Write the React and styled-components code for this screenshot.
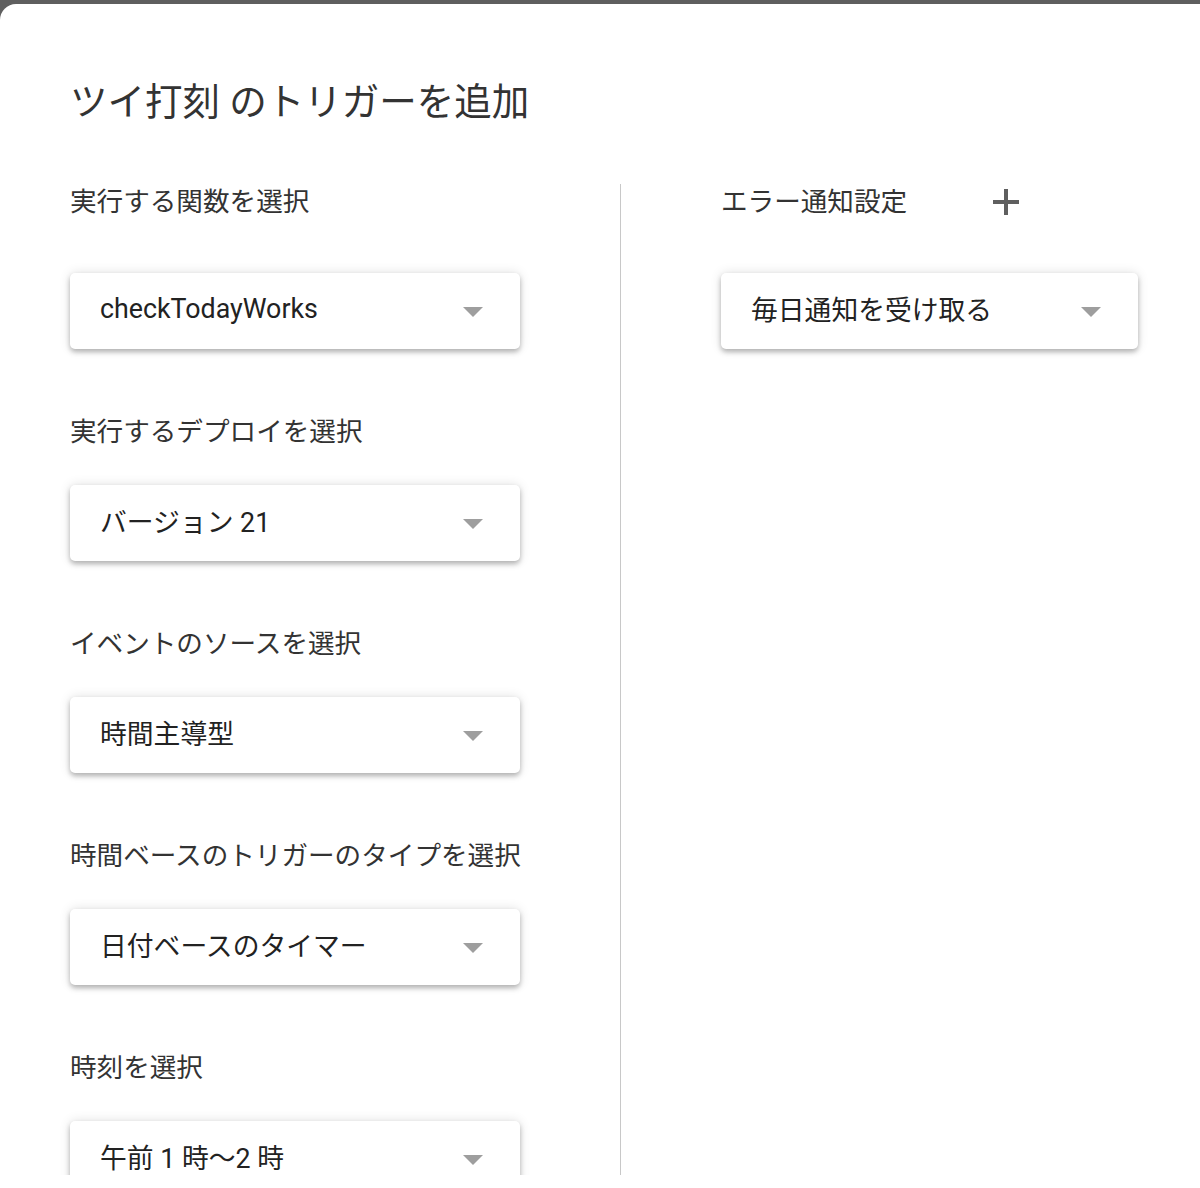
import React from 'react';
import styled, { createGlobalStyle } from 'styled-components';

const GlobalStyle = createGlobalStyle`
  html, body {
    margin: 0;
    padding: 0;
    background-color: #5f5f5f;
  }
  body {
    font-family: Roboto, "Noto Sans CJK JP", "Noto Sans", sans-serif;
  }
`;

const Page = styled.div`
  padding-top: 4px;
  width: 1200px;
  height: 1188px;
  box-sizing: border-box;
  overflow: hidden;
`;

const Dialog = styled.div`
  background-color: white;
  border-top-left-radius: 16px;
  height: 1184px;
  display: flex;
  flex-direction: column;
`;

const Header = styled.div`
  height: 180px;
  box-sizing: border-box;
  padding: 74px 0 0 70px;
`;

const Title = styled.h1`
  margin: 0;
  font-size: 37.5px;
  line-height: 48px;
  font-weight: 400;
  color: #333333;
`;

const Body = styled.div`
  height: 991px;
  overflow: hidden;
  padding-left: 70px;
  display: grid;
  grid-template-columns: 450px 1px 417px;
  column-gap: 100px;
`;

const Column = styled.div`
  display: flex;
  flex-direction: column;
`;

const Divider = styled.div`
  background-color: #c8c8c8;
`;

const Section = styled.div`
  display: flex;
  flex-direction: column;
  gap: ${props => (props.first ? '53px' : '35px')};
  margin-bottom: 65px;
`;

const LabelRow = styled.div`
  display: flex;
  align-items: center;
  height: 36px;
`;

const Label = styled.div`
  font-size: 26.6px;
  line-height: 36px;
  color: #333333;
  white-space: nowrap;
`;

const AddButton = styled.button`
  margin-left: 79px;
  width: 40px;
  height: 40px;
  padding: 0;
  border: none;
  background: transparent;
  display: flex;
  align-items: center;
  justify-content: center;
  cursor: pointer;
`;

const Select = styled.div`
  height: 76px;
  box-sizing: border-box;
  padding: 0 37px 0 30px;
  background-color: white;
  border-radius: 5px;
  box-shadow: 0 3px 5px rgba(0, 0, 0, 0.26), 0 0 12px rgba(0, 0, 0, 0.12);
  display: flex;
  align-items: center;
  justify-content: space-between;
`;

const SelectText = styled.span`
  font-size: 26.8px;
  color: #222222;
  white-space: nowrap;
  padding-bottom: 5px;
`;

const Caret = styled.span`
  width: 0;
  height: 0;
  border-left: 10px solid transparent;
  border-right: 10px solid transparent;
  border-top: 10px solid #9e9e9e;
  margin-top: 2px;
`;

function Dropdown({ value }) {
  return (
    <Select>
      <SelectText>{value}</SelectText>
      <Caret />
    </Select>
  );
}

const fields = [
  { label: '実行する関数を選択', value: 'checkTodayWorks' },
  { label: '実行するデプロイを選択', value: 'バージョン 21' },
  { label: 'イベントのソースを選択', value: '時間主導型' },
  { label: '時間ベースのトリガーのタイプを選択', value: '日付ベースのタイマー' },
  { label: '時刻を選択', value: '午前 1 時〜2 時' },
];

export default function App() {
  return (
    <Page>
      <GlobalStyle />
      <Dialog>
        <Header>
          <Title>ツイ打刻 のトリガーを追加</Title>
        </Header>
        <Body>
          <Column>
            {fields.map((f, i) => (
              <Section key={f.label} first={i === 0}>
                <LabelRow>
                  <Label>{f.label}</Label>
                </LabelRow>
                <Dropdown value={f.value} />
              </Section>
            ))}
          </Column>
          <Divider />
          <Column>
            <Section first>
              <LabelRow>
                <Label>エラー通知設定</Label>
                <AddButton aria-label="追加">
                  <svg width="26" height="26" viewBox="0 0 26 26">
                    <path d="M13 0v26M0 13h26" stroke="#5f5f5f" strokeWidth="4" fill="none" />
                  </svg>
                </AddButton>
              </LabelRow>
              <Dropdown value="毎日通知を受け取る" />
            </Section>
          </Column>
        </Body>
      </Dialog>
    </Page>
  );
}
